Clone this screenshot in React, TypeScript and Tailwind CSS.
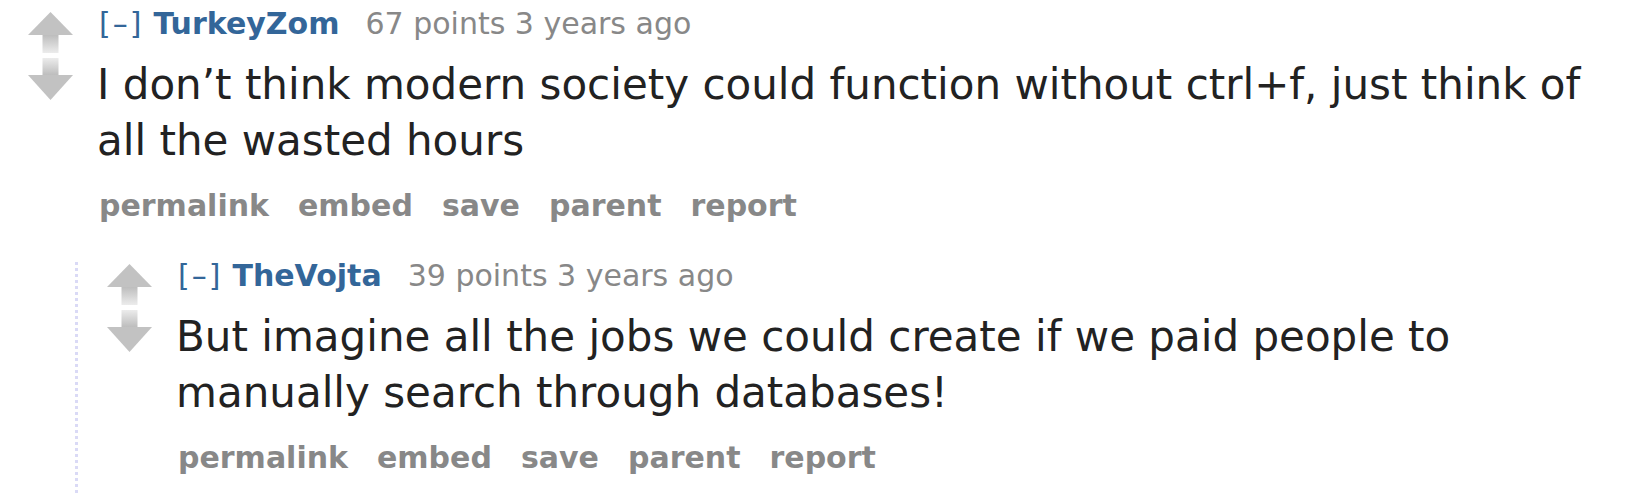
const sans = "font-['DejaVu_Sans',Verdana,sans-serif]"

function VoteArrows({ id }: { id: string }) {
  return (
    <svg width="45" height="88" viewBox="0 0 45 88" className="block">
      <defs>
        <linearGradient id={`${id}-up`} x1="0" y1="0" x2="0" y2="1">
          <stop offset="0" stopColor="#bdbdbd" />
          <stop offset="1" stopColor="#ececec" />
        </linearGradient>
        <linearGradient id={`${id}-down`} x1="0" y1="1" x2="0" y2="0">
          <stop offset="0" stopColor="#bdbdbd" />
          <stop offset="1" stopColor="#ececec" />
        </linearGradient>
      </defs>
      <polygon points="22.5,0 45,23 0,23" fill="#c2c2c2" />
      <rect x="14.5" y="23" width="16" height="18" fill={`url(#${id}-up)`} />
      <rect x="14.5" y="46" width="16" height="17" fill={`url(#${id}-down)`} />
      <polygon points="0,63 45,63 22.5,88" fill="#c2c2c2" />
    </svg>
  )
}

function Buttons() {
  const items = ['permalink', 'embed', 'save', 'parent', 'report']
  return (
    <div className="flex gap-[29px] text-[30px] leading-[34px] font-bold text-[#888]">
      {items.map((b) => (
        <span key={b}>{b}</span>
      ))}
    </div>
  )
}

type CommentProps = {
  id: string
  author: string
  points: number
  lines: string[]
  children?: React.ReactNode
}

function Comment({ id, author, points, lines, children }: CommentProps) {
  return (
    <div>
      <div className="flex">
        <div className="w-[45px] shrink-0 pt-[5px]">
          <VoteArrows id={id} />
        </div>
        <div className="ml-[24px] flex flex-col">
          <div className="flex items-baseline text-[30px] leading-[34px]">
            <span className="ml-[2px] tracking-[2px] text-[#369]">[–]</span>
            <span className="ml-[10px] font-bold text-[#369]">{author}</span>
            <span className="ml-[26px] text-[#888]">{points} points 3 years ago</span>
          </div>
          <div className="mt-[16px] text-[42px] leading-[56px] text-[#222]">
            {lines.map((l) => (
              <div key={l}>{l}</div>
            ))}
          </div>
          <div className="mt-[20px] ml-[2px]">
            <Buttons />
          </div>
        </div>
      </div>
      {children}
    </div>
  )
}

export default function App() {
  return (
    <div className={`h-[496px] w-[1630px] overflow-hidden bg-white pt-[7px] pl-[28px] ${sans}`}>
      <Comment
        id="c1"
        author="TurkeyZom"
        points={67}
        lines={[
          'I don’t think modern society could function without ctrl+f, just think of',
          'all the wasted hours',
        ]}
      >
        <div className="mt-[36px] ml-[47px] flex">
          <div className="mt-[3px] w-[3px] shrink-0 bg-[linear-gradient(to_bottom,#dadaf6_50%,transparent_50%)] bg-[length:3px_6px]" />
          <div className="pl-[29px] pb-[60px]">
            <Comment
              id="c2"
              author="TheVojta"
              points={39}
              lines={[
                'But imagine all the jobs we could create if we paid people to',
                'manually search through databases!',
              ]}
            />
          </div>
        </div>
      </Comment>
    </div>
  )
}
